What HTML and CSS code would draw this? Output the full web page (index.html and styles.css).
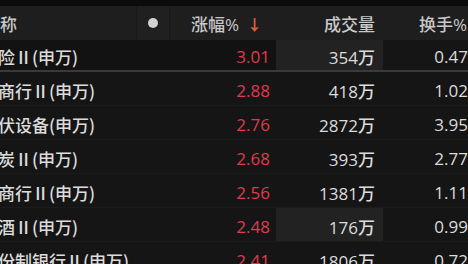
FILE: index.html
```html
<!DOCTYPE html>
<html lang="zh">
<head>
<meta charset="utf-8">
<link rel="stylesheet" href="styles.css">
</head>
<body>
<div class="topstrip"></div>
<div class="table">
  <div class="row head">
    <div class="cell name">名称</div>
    <div class="cell dotcol"><span class="dot"></span></div>
    <div class="cell pct">涨幅%<span class="arrow">↓</span></div>
    <div class="cell vol">成交量</div>
    <div class="cell turn">换手%</div>
  </div>
  <div class="row first">
    <div class="cell name">保险Ⅱ(申万)</div>
    <div class="cell dotcol"></div>
    <div class="cell pct up">3.01</div>
    <div class="cell vol hl">354万</div>
    <div class="cell turn dark">0.47</div>
  </div>
  <div class="row">
    <div class="cell name">城商行Ⅱ(申万)</div>
    <div class="cell dotcol"></div>
    <div class="cell pct up">2.88</div>
    <div class="cell vol">418万</div>
    <div class="cell turn">1.02</div>
  </div>
  <div class="row">
    <div class="cell name">光伏设备(申万)</div>
    <div class="cell dotcol"></div>
    <div class="cell pct up">2.76</div>
    <div class="cell vol">2872万</div>
    <div class="cell turn">3.95</div>
  </div>
  <div class="row">
    <div class="cell name">煤炭Ⅱ(申万)</div>
    <div class="cell dotcol"></div>
    <div class="cell pct up">2.68</div>
    <div class="cell vol">393万</div>
    <div class="cell turn">2.77</div>
  </div>
  <div class="row">
    <div class="cell name">农商行Ⅱ(申万)</div>
    <div class="cell dotcol"></div>
    <div class="cell pct up">2.56</div>
    <div class="cell vol">1381万</div>
    <div class="cell turn">1.11</div>
  </div>
  <div class="row">
    <div class="cell name">白酒Ⅱ(申万)</div>
    <div class="cell dotcol"></div>
    <div class="cell pct up">2.48</div>
    <div class="cell vol hl">176万</div>
    <div class="cell turn">0.99</div>
  </div>
  <div class="row">
    <div class="cell name">股份制银行Ⅱ(申万)</div>
    <div class="cell dotcol"></div>
    <div class="cell pct up">2.41</div>
    <div class="cell vol">1806万</div>
    <div class="cell turn">0.72</div>
  </div>
</div>
</body>
</html>
```
FILE: styles.css
```css
html, body {
  margin: 0;
  padding: 0;
  background: #141414;
  overflow: hidden;
  width: 468px;
  height: 264px;
}
body {
  font-family: "Open Sans", "Noto Sans CJK SC", sans-serif;
  font-size: 17px;
  font-weight: 500;
  color: #dcdcdc;
}
.topstrip {
  height: 6px;
  background: #0b0b0b;
}
.table {
  margin-left: -19px;
  width: 494px;
}
.row {
  display: grid;
  grid-template-columns: 155px 34px 106px 107px 92px;
  height: 34px;
  box-sizing: border-box;
  border-bottom: 1px solid #1b1b1b;
  background: #151515;
}
.row.head {
  background: #1e1e1e;
  border-bottom: none;
  color: #c9c9c9;
}
.row.first {
  height: 32px;
  background: #121212;
  border-bottom: 2px solid #3a3a3a;
}
.cell {
  display: flex;
  align-items: center;
  padding-top: 4px;
  box-sizing: border-box;
  white-space: nowrap;
  overflow: hidden;
}
.row.head .cell { padding-top: 0; }
.row.first .cell { padding-top: 2px; }
.name {
  justify-content: flex-start;
  font-family: "Noto Sans CJK SC", sans-serif;
}
.row.head .name { padding-left: 2px; }
.dotcol {
  justify-content: center;
}
.row.head .dotcol {
  border-left: 1px solid #191919;
  border-right: 1px solid #191919;
  background: #202020;
}
.dot {
  width: 10px;
  height: 10px;
  border-radius: 50%;
  background: #d2d2d2;
}
.pct, .vol, .turn {
  justify-content: flex-end;
}
.pct { padding-right: 6px; }
.row.head .pct { padding-right: 14px; }
.vol { padding-right: 8px; }
.turn { padding-right: 7px; }
.row.head .turn { padding-right: 8px; }
.arrow {
  color: #e2613f;
  margin-left: 8px;
  font-size: 15px;
  font-weight: 700;
}
.up { color: #e03a4e; }
.hl { background: #222222; }
.dark { background: #151515; }
```
